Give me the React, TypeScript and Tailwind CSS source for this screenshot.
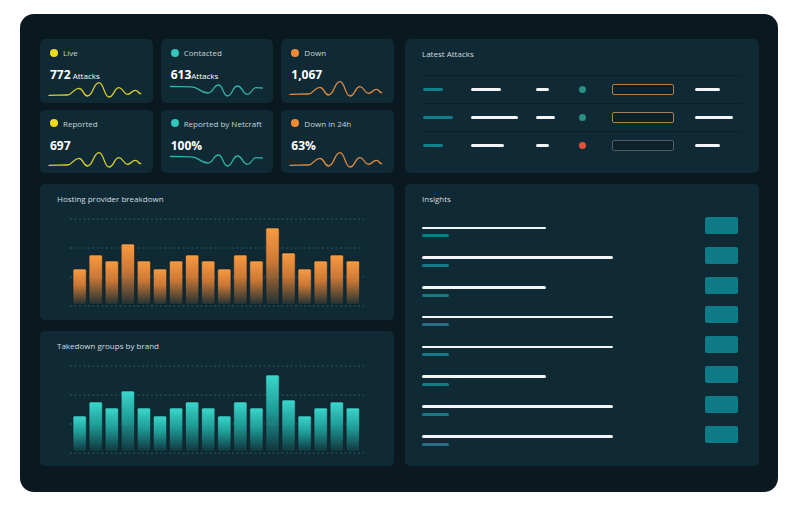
import type { ReactNode } from 'react'

type Pt = [number, number]

const warmWave: Pt[] = [[1,14.3],[19,14],[31,7.3],[39.5,15],[51,1.7],[61,16],[71,6.7],[79.5,13.3],[87.5,9.3],[92.7,12.7]]
const coolWave: Pt[] = [[1.5,5.5],[22,5.8],[39,12],[49.5,4],[58.5,15],[68.5,5],[78.5,13.3],[87,6.7],[93.3,7]]

function wavePath(pts: Pt[]) {
  let d = `M${pts[0][0]} ${pts[0][1]}`
  for (let i = 1; i < pts.length; i++) {
    const [x0, y0] = pts[i - 1]
    const [x1, y1] = pts[i]
    const mx = x0 + (x1 - x0) / 2
    d += ` C${mx} ${y0} ${mx} ${y1} ${x1} ${y1}`
  }
  return d
}

const stats = [
  { label: 'Live', dot: 'bg-[#f0da1c]', stroke: '#d9d02c', value: '772', unit: ' Attacks', wave: warmWave },
  { label: 'Contacted', dot: 'bg-[#35c4bb]', stroke: '#2fb3aa', value: '613', unit: 'Attacks', wave: coolWave },
  { label: 'Down', dot: 'bg-[#f28b38]', stroke: '#e38d40', value: '1,067', unit: '', wave: warmWave },
  { label: 'Reported', dot: 'bg-[#f0da1c]', stroke: '#d9d02c', value: '697', unit: '', wave: warmWave },
  { label: 'Reported by Netcraft', dot: 'bg-[#35c4bb]', stroke: '#2fb3aa', value: '100%', unit: '', wave: coolWave },
  { label: 'Down in 24h', dot: 'bg-[#f28b38]', stroke: '#e38d40', value: '63%', unit: '', wave: warmWave },
]

const attacks = [
  { id: 20, url: 30, tag: 13, dot: 'bg-[#2b8f87]', box: 'border-[#a98150]', ip: 25 },
  { id: 30, url: 47, tag: 19, dot: 'bg-[#2b8f87]', box: 'border-[#a98150]', ip: 38 },
  { id: 20, url: 33, tag: 13, dot: 'bg-[#e5513a]', box: 'border-[#4f5d63]', ip: 25 },
]

const insights = [124, 191, 124, 191, 191, 124, 191, 191]

const barTops = [52, 38, 44, 27, 44, 52, 44, 38, 44, 52, 38, 44, 11, 36, 52, 44, 38, 44]

function Panel({ title, children, className = '' }: { title: string; children?: ReactNode; className?: string }) {
  return (
    <div className={`bg-[#0f2a34] rounded-[5px] pt-[9px] px-[17px] flex flex-col ${className}`}>
      <div className="text-[8px] leading-[11px] text-[#d3dde0]">{title}</div>
      {children}
    </div>
  )
}

function StatCard({ s }: { s: typeof stats[number] }) {
  return (
    <div className="bg-[#0f2a34] rounded-[5px] pt-[8px] pl-[10px] flex flex-col">
      <div className="flex items-center gap-[5px]">
        <span className={`w-[8px] h-[8px] rounded-full ${s.dot}`} />
        <span className="text-[8px] leading-[11px] text-[#c8d4d8]">{s.label}</span>
      </div>
      <div className="mt-[11px] flex items-baseline text-white">
        <span className="text-[12px] leading-[12px] font-bold">{s.value}</span>
        {s.unit && <span className="text-[8px] leading-[12px] whitespace-pre">{s.unit}</span>}
      </div>
      <svg width="95" height="18" viewBox="0 0 95 18" className="-ml-[2px] -mt-px overflow-visible">
        <path d={wavePath(s.wave)} fill="none" stroke={s.stroke} strokeWidth="1.3" strokeLinecap="round" />
      </svg>
    </div>
  )
}

function BarChart({ id, top, bottom }: { id: string; top: string; bottom: string }) {
  return (
    <svg width="296" height="91" viewBox="0 0 296 91" className="ml-[13px] mt-[13px]">
      <defs>
        <linearGradient id={id} x1="0" y1="0" x2="0" y2="1">
          <stop offset="0" stopColor={top} />
          <stop offset="0.45" stopColor={bottom} stopOpacity="0.85" />
          <stop offset="1" stopColor={bottom} stopOpacity="0.08" />
        </linearGradient>
      </defs>
      {[2, 31, 60, 89].map(y => (
        <line key={y} x1="0" x2="294" y1={y} y2={y} stroke="#2f5a66" strokeWidth="1" strokeDasharray="2 2.5" />
      ))}
      {barTops.map((t, i) => (
        <rect key={i} x={3 + i * 16.07} y={t} width="13.3" height={87.5 - t} rx="1.5" fill={`url(#${id})`} stroke="#0a1c22" strokeOpacity="0.7" strokeWidth="0.8" />
      ))}
    </svg>
  )
}

export default function App() {
  return (
    <div className="w-[796px] h-[509px] bg-white pt-[14px] pl-[20px] font-['Open_Sans',sans-serif]">
      <div className="w-[758px] h-[478px] rounded-[14px] bg-[#09191f] pt-[25px] pl-[20px] pr-[19px] grid grid-cols-2 grid-rows-[134px_282px] gap-[11px]">
        <div className="grid grid-cols-3 grid-rows-2 gap-x-[8px] gap-y-[7px]">
          {stats.map(s => <StatCard key={s.label} s={s} />)}
        </div>

        <Panel title="Latest Attacks">
          <div className="mt-[16px] flex flex-col">
            {attacks.map((a, i) => (
              <div key={i} className="h-[28px] border-t border-[#0b2129] flex items-center">
                <div className="w-[49px] pl-px">
                  <div className="h-[3px] rounded-full bg-[#137f8c]" style={{ width: a.id }} />
                </div>
                <div className="w-[65px]">
                  <div className="h-[3px] rounded-full bg-[#f2f5f6]" style={{ width: a.url }} />
                </div>
                <div className="w-[43px]">
                  <div className="h-[3px] rounded-full bg-[#f2f5f6]" style={{ width: a.tag }} />
                </div>
                <div className="w-[33px]">
                  <div className={`w-[7px] h-[7px] rounded-full ${a.dot}`} />
                </div>
                <div className="w-[83px]">
                  <div className={`w-[62px] h-[11px] rounded-[2px] border ${a.box} bg-[#0c2129]`} />
                </div>
                <div>
                  <div className="h-[3px] rounded-full bg-[#f2f5f6]" style={{ width: a.ip }} />
                </div>
              </div>
            ))}
          </div>
        </Panel>

        <div className="flex flex-col gap-[11px]">
          <Panel title="Hosting provider breakdown" className="flex-1">
            <BarChart id="orange" top="#fb9b40" bottom="#ec8535" />
          </Panel>
          <Panel title="Takedown groups by brand" className="flex-1">
            <BarChart id="teal" top="#3bd8cd" bottom="#22b3ab" />
          </Panel>
        </div>

        <Panel title="Insights" className="pr-[21px]">
          <div className="mt-[13px] flex flex-col">
            {insights.map((w, i) => (
              <div key={i} className="h-[29.8px] flex justify-between items-start">
                <div className="pt-[9.5px] flex flex-col">
                  <div className="h-[2.5px] rounded-full bg-[#f2f5f6]" style={{ width: w }} />
                  <div className="mt-[5px] w-[27px] h-[3px] rounded-full bg-[#137a86]" />
                </div>
                <div className="w-[33px] h-[17px] rounded-[2px] bg-[#0f7b86]" />
              </div>
            ))}
          </div>
        </Panel>
      </div>
    </div>
  )
}
